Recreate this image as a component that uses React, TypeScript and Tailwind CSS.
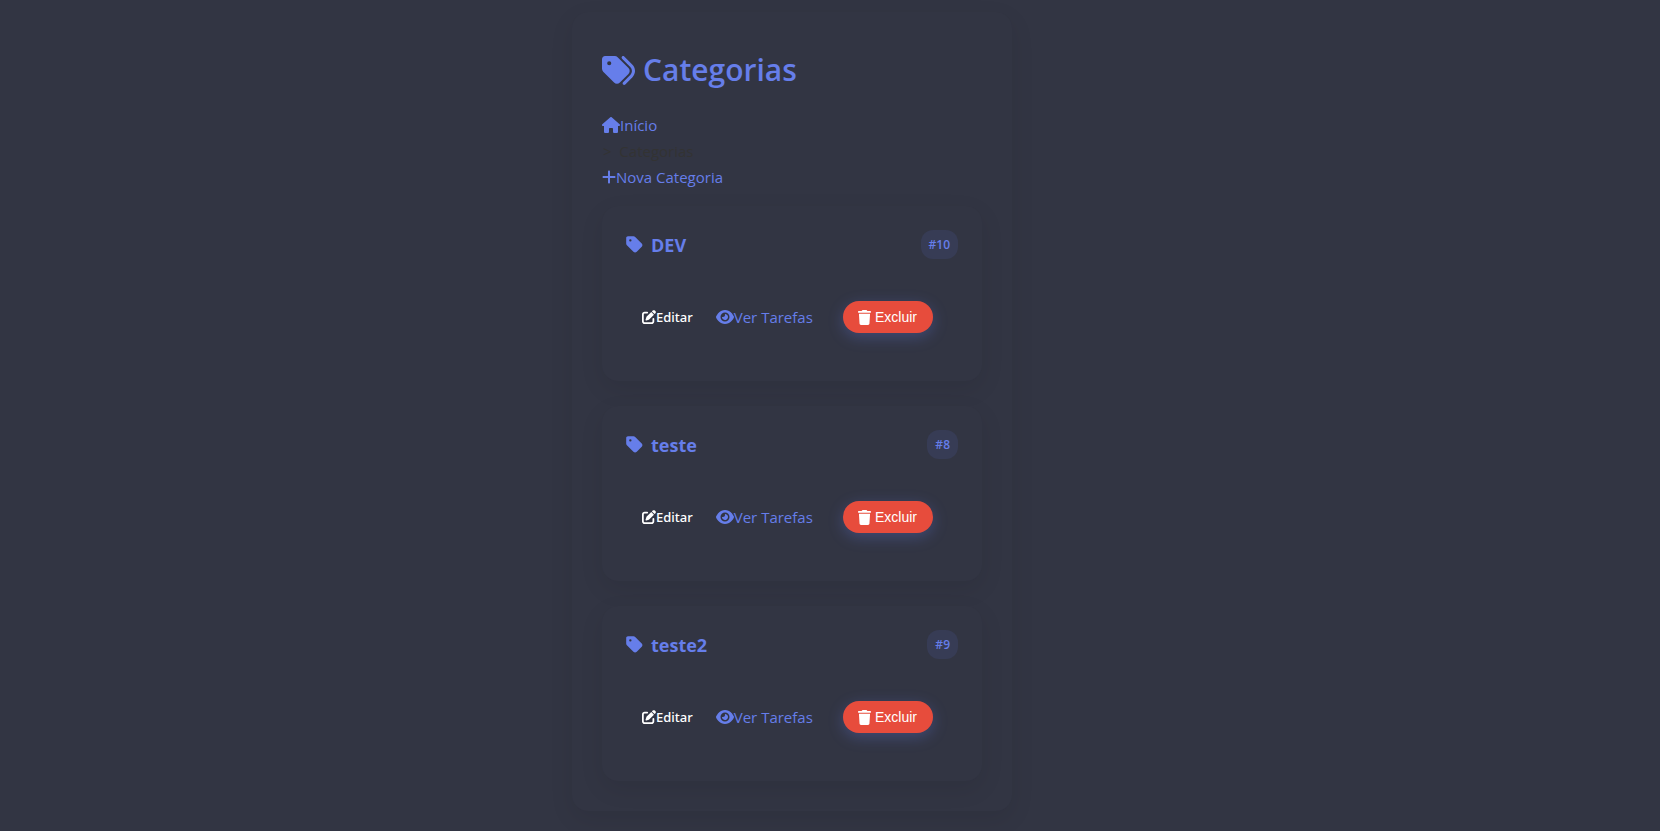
import { FaEye, FaHouse, FaPenToSquare, FaPlus, FaTag, FaTags, FaTrash } from "react-icons/fa6";

type Category = { id: number; name: string };

const categories: Category[] = [
  { id: 10, name: "DEV" },
  { id: 8, name: "teste" },
  { id: 9, name: "teste2" },
];

function CategoryCard({ category }: { category: Category }) {
  return (
    <article className="rounded-2xl bg-[#323543] px-6 pt-6 pb-12 shadow-[0_8px_25px_rgba(0,0,0,0.08)]">
      <header className="flex items-center justify-between">
        <h2 className="flex items-center gap-2 text-[18px] leading-7 font-bold">
          <FaTag className="h-[19px] w-[17px] shrink-0" aria-hidden="true" />
          {category.name}
        </h2>
        <span className="rounded-xl bg-[#373c55] px-2 py-1 text-[12px] leading-[21px] font-semibold">
          #{category.id}
        </span>
      </header>
      <div className="mt-[42px] flex items-center pr-[25px] pl-4">
        <button type="button" className="flex items-center font-['Noto_Sans',sans-serif] text-[13px] leading-8 font-medium text-white">
          <FaPenToSquare className="size-[14px]" aria-hidden="true" />
          Editar
        </button>
        <a href="#tarefas" className="ml-[23px] flex items-center text-[15px] leading-8">
          <FaEye className="size-[18px]" aria-hidden="true" />
          Ver Tarefas
        </a>
        <button
          type="button"
          className="ml-auto flex items-center gap-1 rounded-full bg-[#e74c3c] pr-4 pl-[15px] font-['Liberation_Sans',sans-serif] text-[14px] leading-8 font-medium text-white shadow-[0_4px_15px_rgba(102,126,234,0.3)]"
        >
          <FaTrash className="h-[15px] w-[13px]" aria-hidden="true" />
          Excluir
        </button>
      </div>
    </article>
  );
}

export default function App() {
  return (
    <div className="flex min-h-screen justify-center bg-[#323543] pt-3 pr-[76px] pb-[19px] font-['Open_Sans','Noto_Sans',sans-serif] text-[#667eea]">
      <main className="w-full max-w-[440px] self-start rounded-2xl bg-[#323543] px-[30px] pt-8 pb-[30px] shadow-[0_8px_25px_rgba(0,0,0,0.08)]">
        <h1 className="flex items-center gap-2 text-[30px] leading-[52px] font-semibold">
          <FaTags className="size-[33px]" aria-hidden="true" />
          Categorias
        </h1>
        <nav className="mt-4 flex flex-col items-start text-[15px] leading-[26px]" aria-label="Navegação">
          <a href="#inicio" className="flex items-center">
            <FaHouse className="size-[18px]" aria-hidden="true" />
            Início
          </a>
          <span className="pl-px text-[#333333]">&gt;&nbsp; Categorias</span>
          <a href="#nova" className="flex items-center">
            <FaPlus className="h-4 w-[14px]" aria-hidden="true" />
            Nova Categoria
          </a>
        </nav>
        <section className="mt-4 flex flex-col gap-[25px]">
          {categories.map((category) => (
            <CategoryCard key={category.id} category={category} />
          ))}
        </section>
      </main>
    </div>
  );
}
